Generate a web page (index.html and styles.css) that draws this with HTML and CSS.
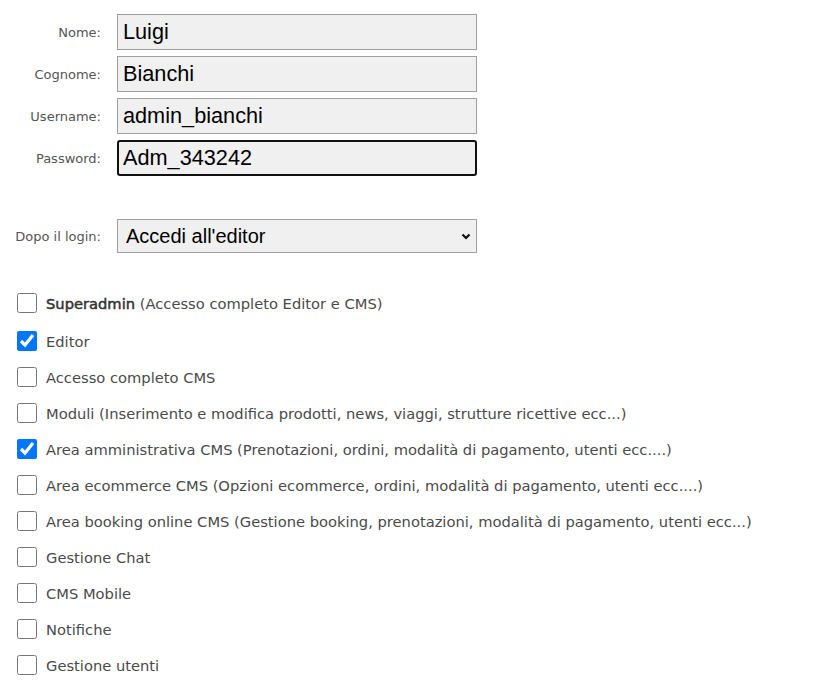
FILE: index.html
```html
<html lang="it">
<head>
  <meta charset="UTF-8">
  <meta name="viewport" content="width=device-width, initial-scale=1.0">
  <title>Utente</title>
  <link rel="stylesheet" href="styles.css">
</head>
<body>
  <div class="form">
    <div class="fields">
      <label for="nome">Nome:</label>
      <input type="text" id="nome" value="Luigi">

      <label for="cognome">Cognome:</label>
      <input type="text" id="cognome" value="Bianchi">

      <label for="username">Username:</label>
      <input type="text" id="username" value="admin_bianchi">

      <label for="password">Password:</label>
      <input type="text" id="password" class="focused" value="Adm_343242">
    </div>

    <div class="fields after-login">
      <label for="redirect">Dopo il login:</label>
      <div class="select-wrap">
        <select id="redirect">
          <option value="editor">Accedi all'editor</option>
          <option value="cms">Accedi al CMS</option>
        </select>
        <svg class="chevron" width="10" height="7" viewBox="0 0 10 7">
          <path d="M1.5 1.5 L5 5 L8.5 1.5" fill="none" stroke="#111" stroke-width="2.2"/>
        </svg>
      </div>
    </div>

    <div class="perms">
      <label class="perm first"><input type="checkbox"><span><b>Superadmin</b> (Accesso completo Editor e CMS)</span></label>
      <label class="perm"><input type="checkbox" checked><span>Editor</span></label>
      <label class="perm"><input type="checkbox"><span>Accesso completo CMS</span></label>
      <label class="perm"><input type="checkbox"><span>Moduli (Inserimento e modifica prodotti, news, viaggi, strutture ricettive ecc...)</span></label>
      <label class="perm"><input type="checkbox" checked><span>Area amministrativa CMS (Prenotazioni, ordini, modalità di pagamento, utenti ecc....)</span></label>
      <label class="perm"><input type="checkbox"><span>Area ecommerce CMS (Opzioni ecommerce, ordini, modalità di pagamento, utenti ecc....)</span></label>
      <label class="perm"><input type="checkbox"><span>Area booking online CMS (Gestione booking, prenotazioni, modalità di pagamento, utenti ecc...)</span></label>
      <label class="perm"><input type="checkbox"><span>Gestione Chat</span></label>
      <label class="perm"><input type="checkbox"><span>CMS Mobile</span></label>
      <label class="perm"><input type="checkbox"><span>Notifiche</span></label>
      <label class="perm"><input type="checkbox"><span>Gestione utenti</span></label>
    </div>
  </div>
</body>
</html>
```

FILE: styles.css
```css
body {
  margin: 0;
  background: white;
  font-family: "DejaVu Sans", sans-serif;
  color: #4a4a4a;
}
.form {
  padding: 14px 0 0 8px;
}
.fields {
  display: grid;
  grid-template-columns: 93px 360px;
  column-gap: 16px;
  row-gap: 6px;
  align-items: center;
}
.fields label {
  text-align: right;
  font-size: 13px;
  color: #555;
}
.fields input, .fields select {
  box-sizing: border-box;
  width: 360px;
  height: 36px;
  margin: 0;
  padding: 0 5px;
  background: #f0f0f0;
  border: 1px solid #a0a0a0;
  border-radius: 0;
  font-family: "Liberation Sans", Arial, sans-serif;
  font-size: 21.7px;
  color: #000;
  outline: none;
}
.fields input.focused {
  border: 2px solid #111;
  border-radius: 3px;
  padding-left: 4px;
}
.after-login {
  margin-top: 43px;
}
.select-wrap {
  position: relative;
}
.fields select {
  height: 34px;
  padding-left: 8px;
  font-size: 20px;
  -webkit-appearance: none;
  appearance: none;
}
.chevron {
  position: absolute;
  right: 6px;
  top: 14px;
}
.perms {
  margin-top: 32px;
  display: flex;
  flex-direction: column;
}
.perm {
  display: flex;
  align-items: center;
  height: 36px;
  font-size: 14.7px;
  color: #4a4a4a;
}
.perm.first {
  margin-bottom: 2px;
}
.perm b {
  font-weight: normal;
  color: #333;
  -webkit-text-stroke: 0.5px #333;
}
.perm input {
  width: 20px;
  height: 20px;
  margin: 0 9px 0 9px;
  accent-color: #0075ff;
}
```
